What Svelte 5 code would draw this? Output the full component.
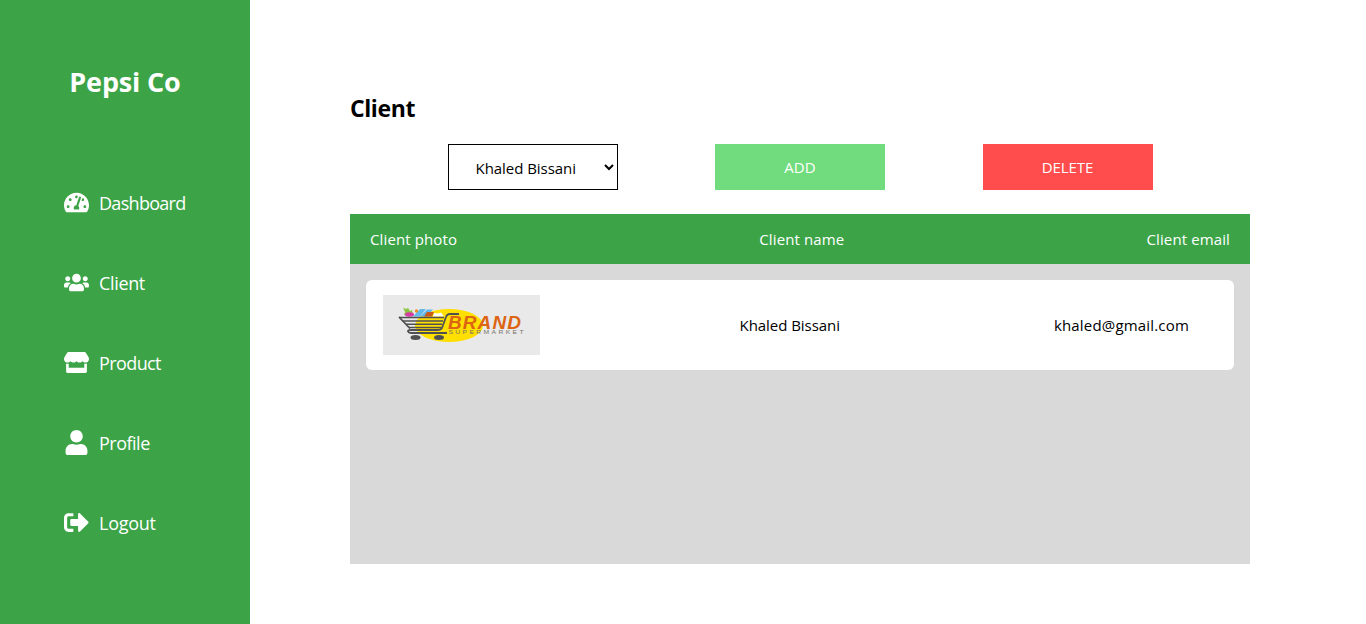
<script>
  const nav = [
    { label: 'Dashboard', box: '0 0 576 512', ls: -0.7, path: 'M288 32C128.94 32 0 160.94 0 320c0 52.8 14.25 102.26 39.06 144.8 5.61 9.62 16.3 15.2 27.44 15.2h443c11.14 0 21.83-5.58 27.44-15.2C561.75 422.26 576 372.8 576 320c0-159.06-128.94-288-288-288zm0 64c14.71 0 26.58 10.13 30.32 23.65-1.11 2.26-2.64 4.23-3.45 6.67l-9.22 27.67c-5.13 3.49-10.97 6.01-17.64 6.01-17.67 0-32-14.33-32-32S270.33 96 288 96zM96 384c-17.67 0-32-14.33-32-32s14.33-32 32-32 32 14.33 32 32-14.33 32-32 32zm48-160c-17.67 0-32-14.33-32-32s14.33-32 32-32 32 14.33 32 32-14.33 32-32 32zm246.77-72.41l-61.33 184C343.13 347.33 352 364.54 352 384c0 11.72-3.38 22.55-8.88 32H232.88c-5.5-9.45-8.88-20.28-8.88-32 0-33.94 26.5-61.43 59.9-63.59l61.34-184.01c4.17-12.56 17.73-19.45 30.36-15.17 12.57 4.19 19.35 17.79 15.17 30.36zm14.66 57.2l15.52-46.55c3.47-1.29 7.13-2.23 11.05-2.23 17.67 0 32 14.33 32 32s-14.33 32-32 32c-11.38-.01-20.89-6.28-26.57-15.22zM480 384c-17.67 0-32-14.33-32-32s14.33-32 32-32 32 14.33 32 32-14.33 32-32 32z' },
    { label: 'Client', box: '0 0 640 512', ls: -0.35, path: 'M96 224c35.3 0 64-28.7 64-64s-28.7-64-64-64-64 28.7-64 64 28.7 64 64 64zm448 0c35.3 0 64-28.7 64-64s-28.7-64-64-64-64 28.7-64 64 28.7 64 64 64zm32 32h-64c-17.6 0-33.5 7.1-45.1 18.6 40.3 22.1 68.9 62 75.1 109.4h66c17.7 0 32-14.3 32-32v-32c0-35.3-28.7-64-64-64zm-256 0c61.9 0 112-50.1 112-112S381.9 32 320 32 208 82.1 208 144s50.1 112 112 112zm76.8 32h-8.3c-20.8 10-43.9 16-68.5 16s-47.6-6-68.5-16h-8.3C179.6 288 128 339.6 128 403.2V432c0 26.5 21.5 48 48 48h288c26.5 0 48-21.5 48-48v-28.8c0-63.6-51.6-115.2-115.2-115.2zm-223.7-13.4C161.5 263.1 145.6 256 128 256H64c-35.3 0-64 28.7-64 64v32c0 17.7 14.3 32 32 32h65.9c6.3-47.4 34.9-87.3 75.2-109.4z' },
    { label: 'Product', box: '0 0 616 512', ls: -0.6, path: 'M602 118.6L537.1 15C531.3 5.7 521 0 510 0H106C95 0 84.7 5.7 78.9 15L14 118.6c-33.5 53.5-3.8 127.9 58.8 136.4 4.5.6 9.1.9 13.7.9 29.6 0 55.8-13 73.8-33.1 18 20.1 44.3 33.1 73.8 33.1 29.6 0 55.8-13 73.8-33.1 18 20.1 44.3 33.1 73.8 33.1 29.6 0 55.8-13 73.8-33.1 18.1 20.1 44.3 33.1 73.8 33.1 4.7 0 9.2-.3 13.7-.9 62.8-8.4 92.6-82.8 59-136.4zM529.5 288c-10 0-19.9-1.5-29.5-3.8V384H116v-99.8c-9.6 2.2-19.5 3.8-29.5 3.8-6 0-12.1-.4-18-1.2-5.6-.8-11.1-2.1-16.4-3.6V480c0 17.7 14.3 32 32 32h448c17.7 0 32-14.3 32-32V283.2c-5.4 1.6-10.8 2.9-16.4 3.6-6.1.8-12.1 1.2-18.2 1.2z' },
    { label: 'Profile', box: '0 0 448 512', ls: -0.5, path: 'M224 256c70.7 0 128-57.3 128-128S294.7 0 224 0 96 57.3 96 128s57.3 128 128 128zm89.6 32h-16.7c-22.2 10.2-46.9 16-72.9 16s-50.6-5.8-72.9-16h-16.7C60.2 288 0 348.2 0 422.4V464c0 26.5 21.5 48 48 48h352c26.5 0 48-21.5 48-48v-41.6c0-74.2-60.2-134.4-134.4-134.4z' },
    { label: 'Logout', box: '0 0 512 512', ls: -0.25, path: 'M497 273L329 441c-15 15-41 4.5-41-17v-96H152c-13.3 0-24-10.7-24-24v-96c0-13.3 10.7-24 24-24h136V88c0-21.4 25.9-32 41-17l168 168c9.3 9.4 9.3 24.6 0 34zM192 436v-40c0-6.6-5.4-12-12-12H96c-17.7 0-32-14.3-32-32V160c0-17.7 14.3-32 32-32h84c6.6 0 12-5.4 12-12V76c0-6.6-5.4-12-12-12H96c-53 0-96 43-96 96v192c0 53 43 96 96 96h84c6.6 0 12-5.4 12-12z' }
  ];
</script>

<div class="page">
  <aside>
    <h1>Pepsi Co</h1>
    <nav>
      {#each nav as item}
        <div class="item">
          <svg viewBox={item.box} width="25" height="25" fill="#fff"><path d={item.path} /></svg>
          <span style="letter-spacing: {item.ls}px">{item.label}</span>
        </div>
      {/each}
    </nav>
  </aside>
  <main>
    <h2>Client</h2>
    <div class="actions">
      <select><option>Khaled Bissani</option></select>
      <button class="add">ADD</button>
      <button class="delete">DELETE</button>
    </div>
    <section>
      <header>
        <span>Client photo</span><span>Client name</span><span>Client email</span>
      </header>
      <div class="row">
        <svg class="photo" viewBox="0 0 157 60" width="157" height="60">
          <rect width="157" height="60" fill="#e9e9e9" />
          <ellipse cx="66" cy="30.5" rx="34" ry="16.5" fill="#ffdf00" />
          <path d="M20 12.500l3 1.500 2-1 2 3 2-1 1 5h-9l1-3z" fill="#8cc540" />
          <ellipse cx="26.5" cy="19.500" rx="4.500" ry="2.200" fill="#d93ba5" />
          <path d="M30 21.500l7-7.500h6l-6 7.500z" fill="#62b9ee" />
          <circle cx="33.500" cy="16" r="1.700" fill="#f08a24" />
          <path d="M37 21.500l7-7h6l-6 7z" fill="#62b9ee" />
          <path d="M41 21.500l3-4.500h7l-2 4.500z" fill="#c85a1b" />
          <path d="M50 21.500l1-3.500 4 .5 3-1 3 4z" fill="#fff" />
          <g fill="none" stroke="#505052" stroke-width="1.5">
            <path d="M16 22.500H61M20 26H60M23 29.200H59M26 32.500H58" />
            <path d="M16 22l11 11.500M76 19H67q-3 0-4 3l-4 11q-1 2-4 2H28q-3 0-3 1.500 .5 1.500 3 1.500H64" stroke-width="1.800" />
          </g>
          <ellipse cx="32.500" cy="42.500" rx="5" ry="2.500" fill="#505052" />
          <ellipse cx="56" cy="42.500" rx="5" ry="2.500" fill="#505052" />
          <text x="65" y="34.300" class="brand" textLength="74" lengthAdjust="spacingAndGlyphs">BRAND</text>
          <text transform="translate(65.500 39.200) scale(1.500 1)" class="market" textLength="50" lengthAdjust="spacing">SUPERMARKET</text>
        </svg>
        <span class="name">Khaled Bissani</span>
        <span class="email">khaled@gmail.com</span>
      </div>
    </section>
  </main>
</div>

<style>
  :global(body) { margin: 0; background: #fff; }
  .page { display: flex; height: 624px; font-family: "Open Sans", "Noto Sans", sans-serif; font-size: 15px; overflow: hidden; }
  aside { width: 250px; background: #3ca447; color: #fff; flex: none; }
  h1 { margin: 62px 0 61px; height: 40px; line-height: 40px; text-align: center; font-size: 27px; font-weight: 700; letter-spacing: -0.15px; }
  .item { height: 80px; display: flex; align-items: center; gap: 10px; padding-left: 64px; font-size: 18px; }
  .item svg { flex: none; margin-bottom: 2px; }
  main { width: 900px; margin-left: 100px; padding-top: 89px; }
  h2 { margin: 0; height: 38px; line-height: 38px; font-size: 23px; letter-spacing: -0.4px; }
  .actions { display: flex; justify-content: space-evenly; margin-top: 17px; height: 46px; }
  select, button { width: 170px; height: 46px; box-sizing: border-box; font-family: inherit; font-size: 15px; border: 0; border-radius: 0; }
  select { border: 1px solid #000; background: #fff; color: #000; padding: 2px 1px 0 23px; letter-spacing: -0.05px; }
  button { color: #fff; padding: 0; }
  .add { background: #70dc7d; }
  .delete { background: #ff4d4d; letter-spacing: -0.1px; }
  section { height: 350px; margin-top: 24px; background: #d9d9d9; }
  header { height: 50px; padding: 0 20px; display: flex; justify-content: space-between; align-items: center; background: #3ca447; color: #fff; letter-spacing: 0.12px; }
  .row { margin: 16px; height: 90px; border-radius: 6px; background: #fff; display: flex; align-items: center; padding: 0 45px 0 17px; box-sizing: border-box; }
  .name { margin-left: 199.5px; letter-spacing: -0.05px; }
  .email { margin-left: auto; letter-spacing: 0.18px; }
  .brand { font: italic 700 17.5px "Liberation Sans", sans-serif; fill: #dc6412; letter-spacing: 1px; }
  .market { font: 4.5px "Liberation Sans", sans-serif; fill: #77726a; }
</style>
